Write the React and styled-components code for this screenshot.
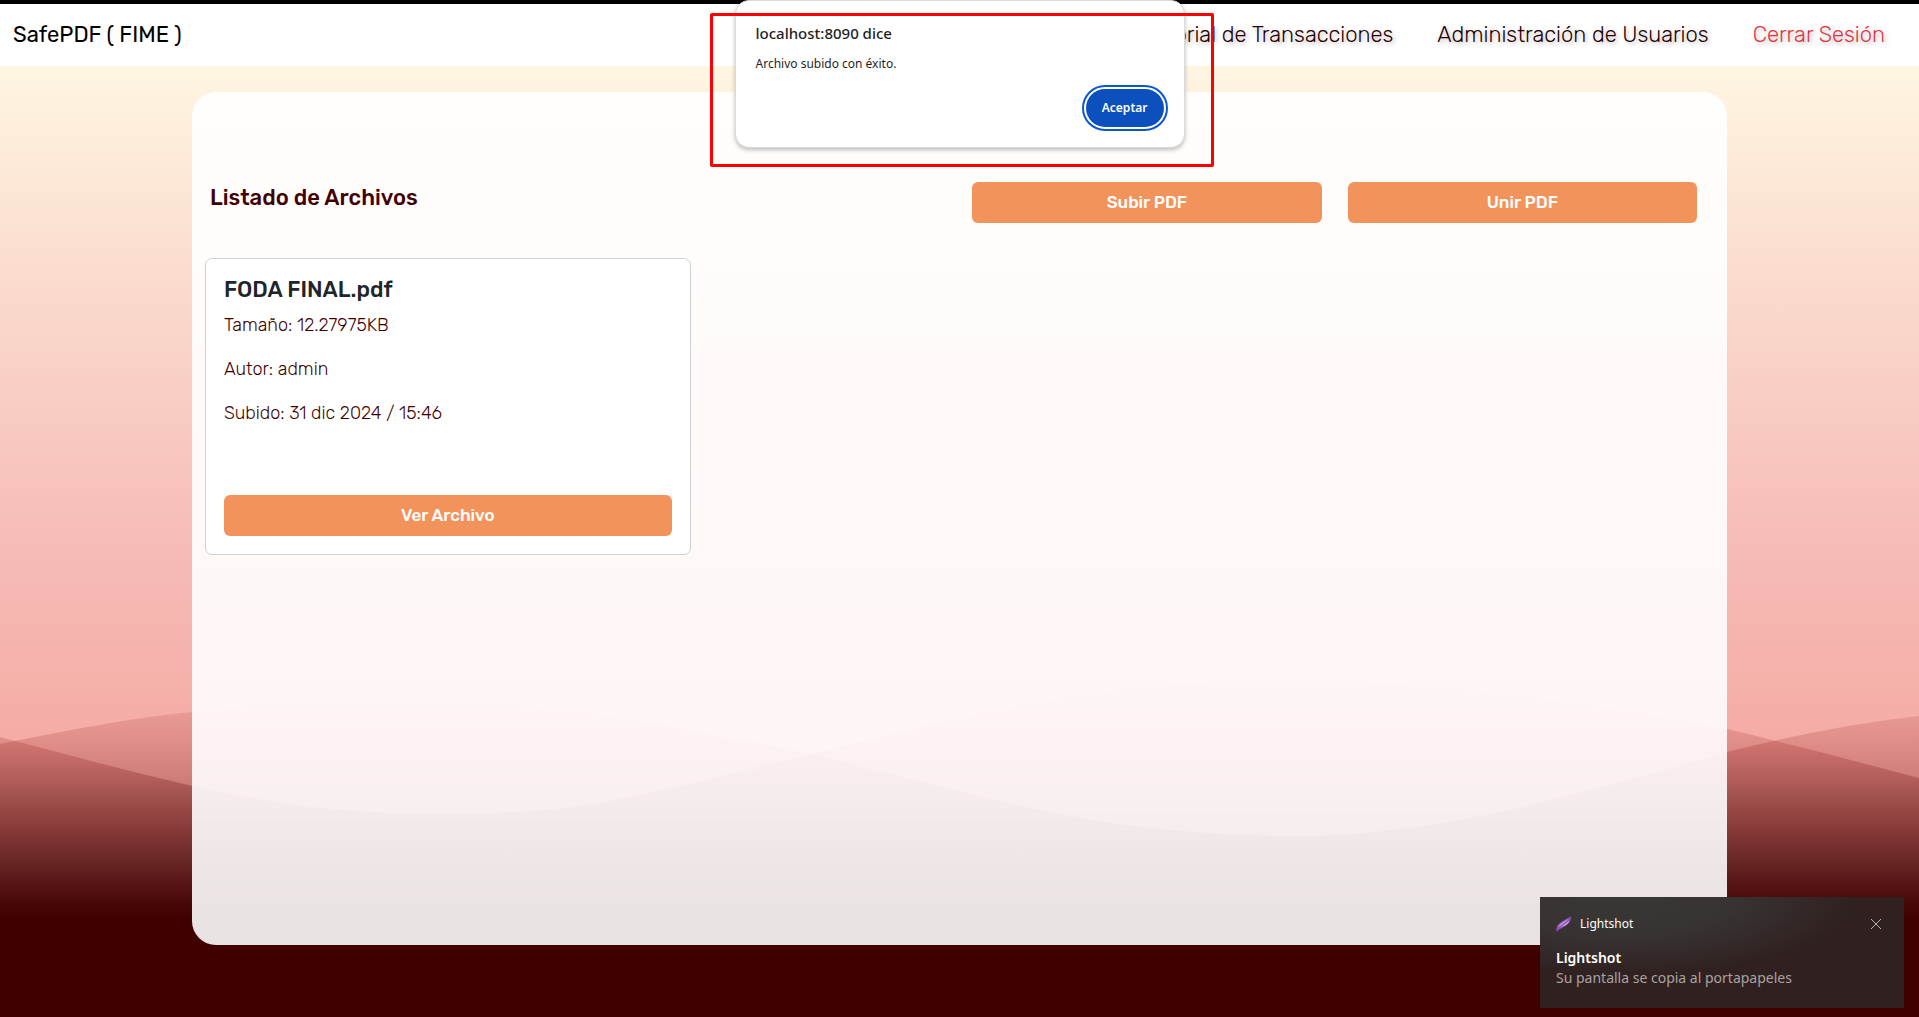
import React from "react";
import styled, { createGlobalStyle, css } from "styled-components";

const GlobalStyle = createGlobalStyle`
  *, *::before, *::after { box-sizing: border-box; }
  body {
    margin: 0;
    background: #400000;
    color: #400000;
    font-family: "Rubik", "Inter", "Roboto", sans-serif;
    font-size: 18px;
    line-height: 26px;
  }
  button { font: inherit; cursor: pointer; }
  h1, h2, p { margin: 0; }
`;

const system = css`
  font-family: "Segoe UI", "Noto Sans", "Open Sans", sans-serif;
`;

const Page = styled.div`
  position: relative;
  isolation: isolate;
  min-height: 100vh;
`;

const Backdrop = styled.svg`
  position: absolute;
  inset: 0;
  z-index: -1;
  width: 100%;
  height: 100%;
`;

const Header = styled.header`
  display: flex;
  align-items: center;
  justify-content: space-between;
  min-height: 66px;
  padding: 0 34px 0 13px;
  border-top: 4px solid #000;
  background: #fff;
  font-size: 22px;
`;

const Brand = styled.a`
  color: #000;
  text-decoration: none;
`;

const Nav = styled.nav`
  display: flex;
  gap: 44px;
`;

const NavLink = styled.a`
  color: ${(p) => (p.$danger ? "#dc3545" : "#200000")};
  font-weight: 300;
  text-decoration: none;
  text-shadow: 2px 2px 4px rgba(64, 0, 0, 0.3);
`;

const Panel = styled.main`
  width: 80%;
  min-height: calc(100vh - 164px);
  margin: 26px auto 0;
  padding: 90px 13px 13px;
  border-radius: 24px;
  background: rgba(255, 255, 255, 0.89);
`;

const Toolbar = styled.div`
  display: grid;
  grid-template-columns: 1fr 23.5% 23.5%;
  gap: 26px;
  padding: 0 17px 0 5px;
`;

const Heading = styled.h1`
  font-size: 22px;
  font-weight: 500;
  line-height: 32px;
`;

const Button = styled.button`
  width: 100%;
  padding: 7px 12px 8px;
  border: 0;
  border-radius: 6px;
  background: #f3935c;
  color: #fff;
  font-size: 17px;
  font-weight: 500;
`;

const Files = styled.div`
  display: grid;
  grid-template-columns: repeat(3, 1fr);
  gap: 26px;
  margin-top: 35px;
`;

const Card = styled.article`
  display: flex;
  flex-direction: column;
  gap: 18px;
  padding: 18px;
  border: 1px solid #d0d1d2;
  border-radius: 7px;
  background: #fff;
`;

const FileName = styled.h2`
  margin-bottom: -9px;
  color: #212529;
  font-size: 22px;
  font-weight: 500;
  line-height: 26px;
`;

const Detail = styled.p`
  font-weight: 300;
`;

const CardAction = styled.div`
  padding-top: 51px;
`;

const Highlight = styled.div`
  position: absolute;
  top: 13px;
  left: 50%;
  width: 504px;
  height: 154px;
  margin-left: -250px;
  border: 3px solid #f00;
  border-radius: 2px;
  pointer-events: none;
`;

const Dialog = styled.section`
  ${system}
  position: absolute;
  top: 0;
  left: 50%;
  width: 450px;
  margin-left: -225px;
  padding: 19px 20px 20px;
  border: 1px solid #dadada;
  border-radius: 14px;
  background: #fff;
  box-shadow: 0 2px 4px rgba(0, 0, 0, 0.25);
  color: #1f1f1f;
  font-size: 12px;
  line-height: 20px;
`;

const DialogTitle = styled.h2`
  margin-bottom: 8px;
  font-size: 15px;
  font-weight: 500;
  line-height: 26px;
`;

const DialogActions = styled.div`
  display: flex;
  justify-content: flex-end;
  padding-top: 15px;
`;

const Accept = styled.button`
  height: 38px;
  padding: 0 16px;
  border: 0;
  border-radius: 19px;
  outline: 2px solid #0b57d0;
  outline-offset: 2px;
  background: #0b50bd;
  color: #fff;
  font-weight: 600;
`;

const Toast = styled.aside`
  ${system}
  position: absolute;
  right: 15px;
  bottom: 9px;
  width: 364px;
  padding: 16px 22px 20px 16px;
  background: radial-gradient(ellipse 240px 80px at 80px 0, #393735 0%, #373332 50%, #302020 100%);
  color: #a8a3a2;
  font-size: 14px;
  line-height: 20px;
`;

const ToastBar = styled.div`
  display: flex;
  align-items: center;
  gap: 8px;
  height: 22px;
  margin-bottom: 13px;
  color: #fff;
  font-size: 12px;
`;

const Close = styled.button`
  display: flex;
  margin-left: auto;
  padding: 0;
  border: 0;
  background: none;
  color: #b5b1b0;
`;

const ToastTitle = styled.h2`
  color: #fff;
  font-size: 14px;
  font-weight: 600;
  line-height: 20px;
`;

const WAVE_BACK =
  "M0 744 C70 730 130 718 192 712 C270 702 340 702 400 702 C470 702 540 706 600 715 C675 726 745 740 813 754 C890 774 960 792 1030 808 C1120 828 1210 836 1300 836 C1430 836 1560 800 1727 752 C1790 736 1850 724 1919 716 V1017 H0 Z";
const WAVE_FRONT =
  "M0 737 C64 754 128 771 192 786 C270 804 350 814 440 814 C500 814 550 811 600 803 C680 788 745 769 813 754 C890 734 970 714 1050 700 C1130 687 1200 681 1290 681 C1430 681 1580 700 1727 729 C1790 744 1855 761 1919 778 V1017 H0 Z";

function Waves() {
  return (
    <Backdrop viewBox="0 0 1919 1017" preserveAspectRatio="none" aria-hidden="true">
      <defs>
        <linearGradient id="sky" gradientUnits="userSpaceOnUse" x1="0" y1="66" x2="0" y2="760">
          <stop offset="0" stopColor="#fff6e2" />
          <stop offset="0.25" stopColor="#fbe0d1" />
          <stop offset="0.7" stopColor="#f6bbb6" />
          <stop offset="1" stopColor="#f5aaa3" />
        </linearGradient>
        <linearGradient id="hill" gradientUnits="userSpaceOnUse" x1="0" y1="680" x2="0" y2="924">
          <stop offset="0" stopColor="#a02525" stopOpacity="0.07" />
          <stop offset="0.13" stopColor="#982020" stopOpacity="0.14" />
          <stop offset="0.27" stopColor="#8a1515" stopOpacity="0.21" />
          <stop offset="0.445" stopColor="#600808" stopOpacity="0.3" />
          <stop offset="0.74" stopColor="#400000" stopOpacity="0.52" />
          <stop offset="0.88" stopColor="#400000" stopOpacity="0.7" />
          <stop offset="1" stopColor="#400000" stopOpacity="1" />
        </linearGradient>
      </defs>
      <rect width="1919" height="1017" fill="url(#sky)" />
      <path d={WAVE_BACK} fill="url(#hill)" />
      <path d={WAVE_FRONT} fill="url(#hill)" />
    </Backdrop>
  );
}

function Feather() {
  return (
    <svg width="16" height="16" viewBox="0 0 16 16" aria-hidden="true">
      <path d="M.5 15.8C0 12.500.8 9.800 3.200 7.600 6.500 4.500 11.500 2.500 14.800.2c.4 3.200-.4 5.600-2.800 7.800C8.500 11.200 3.800 12.400.5 15.800Z" fill="#8d4fb8" />
      <path d="M2 11.200C3.800 7.800 8.300 5.300 12.800 3 9.500 6.300 5.600 8.300 2 11.200Z" fill="#d3b0e6" />
      <path d="M4 11.600C7.800 10.200 12.300 8.400 13.500 4.600 10.800 7.600 7.400 9 4 11.600Z" fill="#d9cdea" />
    </svg>
  );
}

export default function App() {
  return (
    <Page>
      <GlobalStyle />
      <Waves />
      <Header>
        <Brand href="#">SafePDF ( FIME )</Brand>
        <Nav>
          <NavLink href="#">Historial de Transacciones</NavLink>
          <NavLink href="#">Administración de Usuarios</NavLink>
          <NavLink href="#" $danger>Cerrar Sesión</NavLink>
        </Nav>
      </Header>
      <Panel>
        <Toolbar>
          <Heading>Listado de Archivos</Heading>
          <Button type="button">Subir PDF</Button>
          <Button type="button">Unir PDF</Button>
        </Toolbar>
        <Files>
          <Card>
            <FileName>FODA FINAL.pdf</FileName>
            <Detail>Tamaño: 12.27975KB</Detail>
            <Detail>Autor: admin</Detail>
            <Detail>Subido: 31 dic 2024 / 15:46</Detail>
            <CardAction>
              <Button type="button">Ver Archivo</Button>
            </CardAction>
          </Card>
        </Files>
      </Panel>
      <Dialog role="alertdialog" aria-labelledby="dialog-title">
        <DialogTitle id="dialog-title">localhost:8090 dice</DialogTitle>
        <p>Archivo subido con éxito.</p>
        <DialogActions>
          <Accept type="button">Aceptar</Accept>
        </DialogActions>
      </Dialog>
      <Highlight />
      <Toast role="status">
        <ToastBar>
          <Feather />
          <span>Lightshot</span>
          <Close type="button" aria-label="Cerrar">
            <svg width="12" height="12" viewBox="0 0 12 12" fill="none" stroke="currentColor" aria-hidden="true">
              <path d="M1 1l10 10M11 1L1 11" />
            </svg>
          </Close>
        </ToastBar>
        <ToastTitle>Lightshot</ToastTitle>
        <p>Su pantalla se copia al portapapeles</p>
      </Toast>
    </Page>
  );
}
